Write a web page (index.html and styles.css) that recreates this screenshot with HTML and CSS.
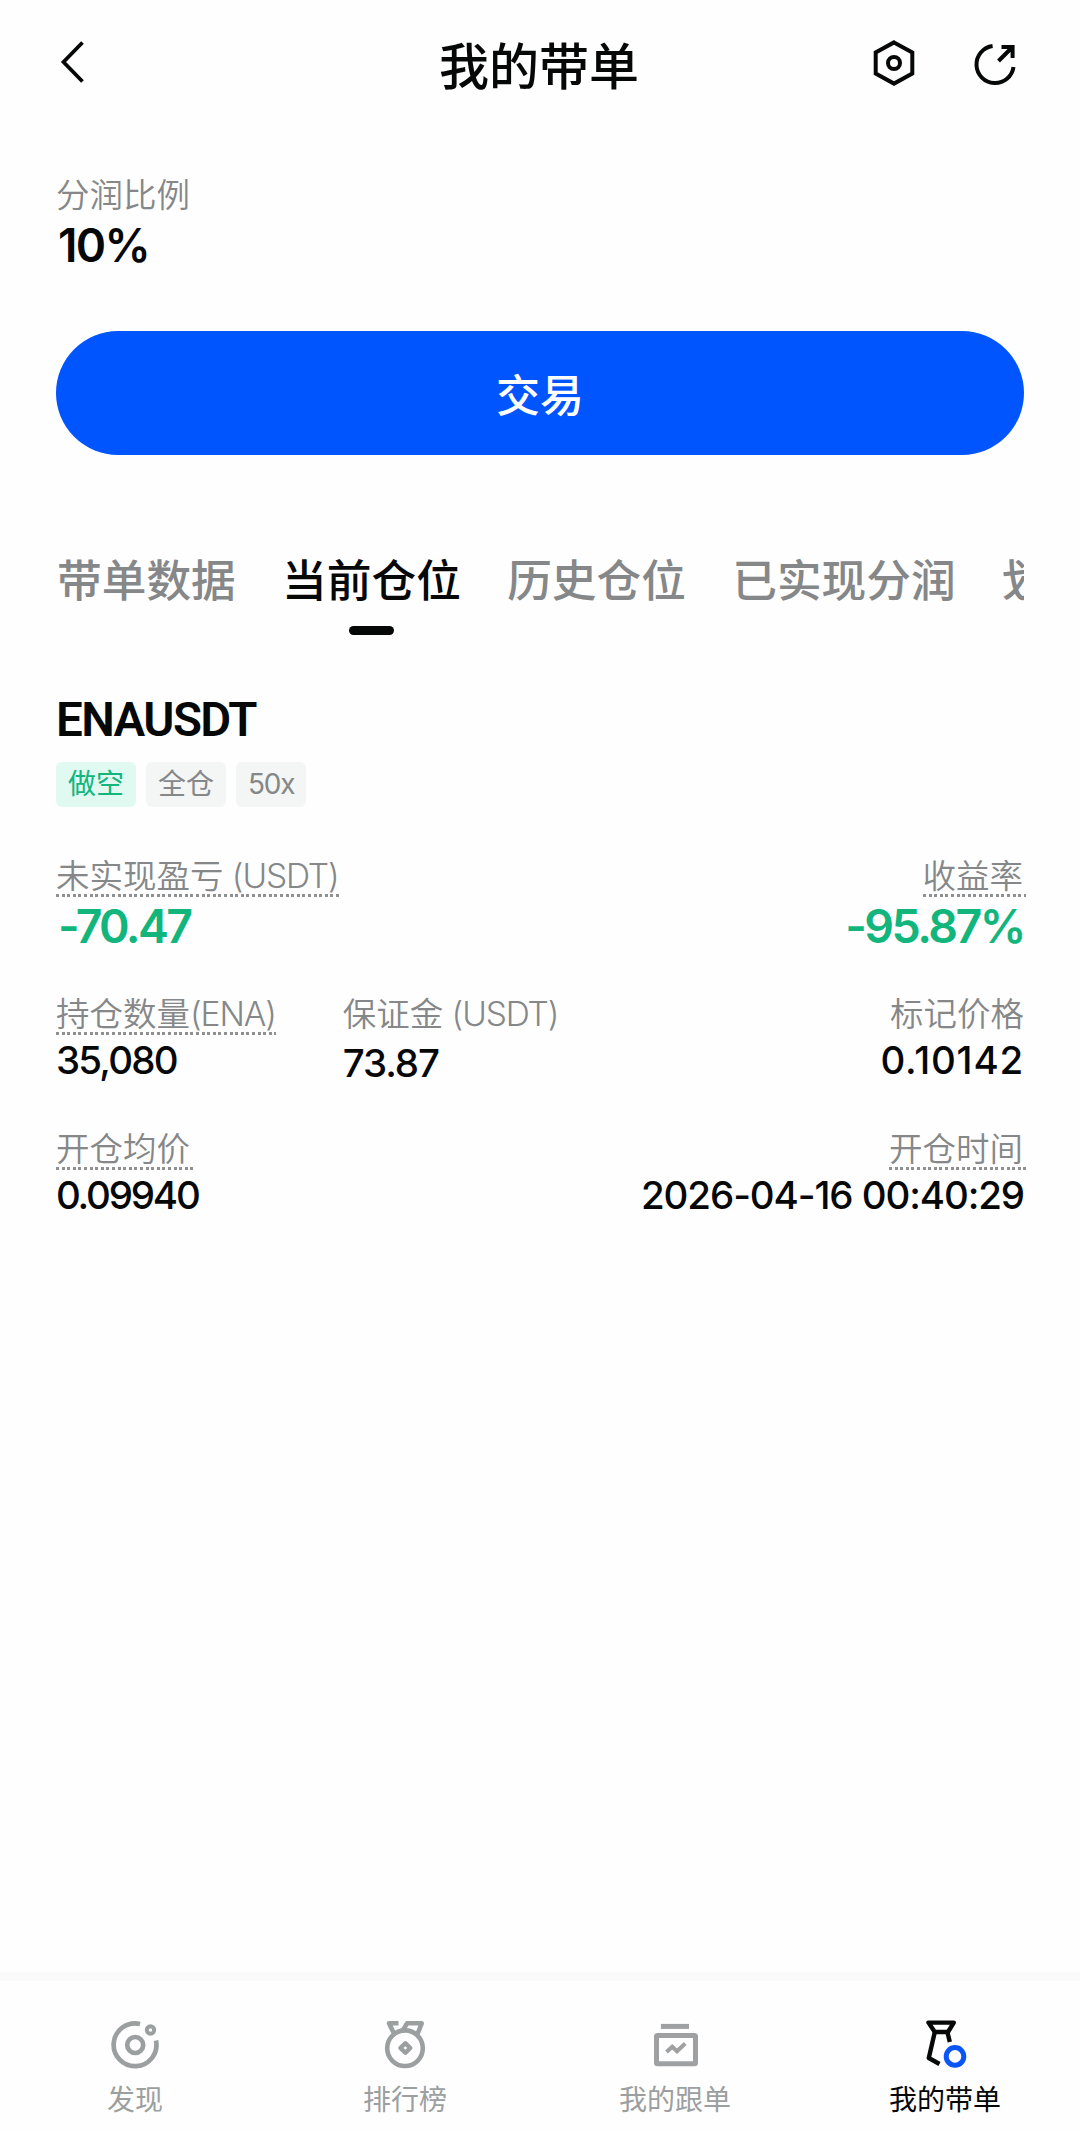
FILE: index.html
```html
<!DOCTYPE html>
<html lang="zh-CN">
<head>
  <meta charset="UTF-8" />
  <title>我的带单</title>
  <link rel="stylesheet" href="styles.css">
</head>
<body>
<header class="topbar">
  <a class="back" href="#">
    <svg width="28" height="46" viewBox="0 0 28 46" fill="none" stroke="#060707" stroke-width="3.8"><path d="M24.5 2.5 L5.5 22 L24.5 41.5"/></svg>
  </a>
  <h1>我的带单</h1>
  <div class="actions">
    <svg width="48" height="48" viewBox="0 0 48 48" fill="none" stroke="#060707" stroke-width="4">
      <path d="M24 3.4 L42.3 13.5 V34.5 L24 44.6 L5.7 34.5 V13.5 Z"/>
      <circle cx="24" cy="24" r="6"/>
    </svg>
    <svg width="48" height="48" viewBox="0 0 48 48" fill="none" stroke="#060707" stroke-width="4">
      <path d="M21.6 7 A18.6 18.6 0 1 0 42.5 28"/>
      <path d="M27.5 22 L41.5 8 M30.5 8 H41.6 V19"/>
    </svg>
  </div>
</header>

<section class="share">
  <p class="label">分润比例</p>
  <p class="rate">10%</p>
  <button class="trade-btn">交易</button>
</section>

<nav class="tabs">
  <a href="#">带单数据</a>
  <a href="#" class="active">当前仓位</a>
  <a href="#">历史仓位</a>
  <a href="#">已实现分润</a>
  <a href="#">划</a>
</nav>

<main class="position">
  <h2>ENAUSDT</h2>
  <div class="tags">
    <span class="tag short">做空</span>
    <span class="tag">全仓</span>
    <span class="tag leverage">50x</span>
  </div>

  <div class="row pnl">
    <div class="cell">
      <span class="label dotted">未实现盈亏<span class="unit"> (USDT)</span></span>
      <span class="value loss">-70.47</span>
    </div>
    <div class="cell right">
      <span class="label dotted">收益率</span>
      <span class="value percent">-95.87%</span>
    </div>
  </div>

  <div class="row">
    <div class="cell">
      <span class="label dotted qty">持仓数量<span class="unit">(ENA)</span></span>
      <span class="value">35,080</span>
    </div>
    <div class="cell margin">
      <span class="label">保证金<span class="unit"> (USDT)</span></span>
      <span class="value">73.87</span>
    </div>
    <div class="cell right">
      <span class="label">标记价格</span>
      <span class="value mark">0.10142</span>
    </div>
  </div>

  <div class="row">
    <div class="cell">
      <span class="label dotted">开仓均价</span>
      <span class="value entry">0.09940</span>
    </div>
    <div class="cell right">
      <span class="label dotted">开仓时间</span>
      <span class="value time">2026-04-16 00:40:29</span>
    </div>
  </div>
</main>

<footer class="bottom-nav">
  <a href="#">
    <svg width="54" height="54" viewBox="0 0 54 54" fill="none" stroke="#9c9fa0" stroke-width="4.7">
      <path d="M32 6 A21.4 21.4 0 1 0 48 22.5"/>
      <circle cx="27.2" cy="27" r="8"/>
      <circle cx="42.5" cy="12" r="3.7" stroke-width="4"/>
    </svg>
    <span>发现</span>
  </a>
  <a href="#">
    <svg width="54" height="54" viewBox="0 0 54 54" fill="none" stroke="#9c9fa0" stroke-width="4.6" stroke-linejoin="round">
      <circle cx="27" cy="30.2" r="17.8"/>
      <path d="M27.3 25.2 L32.3 30 L27.3 34.8 L22.4 30 Z" stroke-width="4.4"/>
      <path d="M20.5 5.3 H11 L15.5 14.5 M24 14 L29 5.3 H43.7 L39.5 16"/>
    </svg>
    <span>排行榜</span>
  </a>
  <a href="#">
    <svg width="54" height="54" viewBox="0 0 54 54" fill="none" stroke="#9fa0a1" stroke-width="5">
      <path d="M12.9 8.4 H41"/>
      <rect x="8.5" y="17.5" width="39" height="28.2" rx="1"/>
      <path d="M18.5 34 L24.2 28.8 L29 33.3 L37.2 25.5" stroke-width="4"/>
    </svg>
    <span>我的跟单</span>
  </a>
  <a href="#" class="active">
    <svg width="54" height="54" viewBox="0 0 54 54" fill="none" stroke="#060707" stroke-width="4.4" stroke-linejoin="round">
      <path d="M10.5 4.6 H35.8 L30 14 H16.8 Z"/>
      <path d="M16.8 14 L10.8 40 L21.5 46 M29.4 14 L31.8 24"/>
      <circle cx="37" cy="38.4" r="8.8" stroke="#0a55f5" stroke-width="5"/>
    </svg>
    <span>我的带单</span>
  </a>
</footer>
</body>
</html>
```
FILE: styles.css
```css
* {
  box-sizing: border-box;
}
body {
  margin: 0;
  height: 2131px;
  display: flex;
  flex-direction: column;
  background: #fefefe;
  color: #060707;
  font-family: Inter, "Noto Sans CJK SC", sans-serif;
  overflow: hidden;
}
h1, h2, p {
  margin: 0;
}
a {
  color: inherit;
  text-decoration: none;
}
svg {
  display: block;
}

.topbar {
  height: 126px;
  padding: 0 61px 0 58px;
  display: grid;
  grid-template-columns: 1fr auto 1fr;
  align-items: center;
}
.topbar h1 {
  padding: 7px 0 0 1px;
  font-size: 50px;
  font-weight: 500;
  line-height: 60px;
}
.actions {
  display: flex;
  justify-content: flex-end;
  gap: 53px;
}

.label {
  color: #858788;
  font-size: 33.5px;
  font-weight: 350;
  line-height: 40px;
  white-space: nowrap;
}
.unit {
  letter-spacing: -1.1px;
}
.share {
  padding: 49px 56px 0;
}
.rate {
  margin-top: 6px;
  padding-left: 2px;
  font-size: 46px;
  font-weight: 600;
  line-height: 48px;
  letter-spacing: -1.6px;
}
.trade-btn {
  display: block;
  width: 100%;
  height: 124px;
  margin-top: 62px;
  border: none;
  border-radius: 62px;
  background: #0055ff;
  color: #fff;
  font-family: inherit;
  font-size: 44px;
  font-weight: 500;
  cursor: pointer;
}

.tabs {
  display: flex;
  gap: 46.3px;
  height: 90px;
  margin: 96px 56px 0;
  padding-left: 1px;
  overflow: hidden;
  color: #858788;
  font-size: 44.7px;
  font-weight: 500;
  line-height: 60px;
  white-space: nowrap;
}
.tabs .active {
  color: #060707;
}
.tabs .active::after {
  content: "";
  display: block;
  width: 45px;
  height: 9px;
  margin: 15px auto 0;
  border-radius: 5px;
  background: #060707;
}

.position {
  flex: 1;
  padding: 51px 56px 0;
}
.position h2 {
  font-family: Roboto, Inter, sans-serif;
  font-size: 47.5px;
  font-weight: 600;
  line-height: 56px;
  letter-spacing: -1.6px;
}
.tags {
  display: flex;
  gap: 10px;
  margin-top: 14px;
}
.tag {
  height: 45px;
  padding: 0 12px;
  border-radius: 6px;
  background: #f4f5f5;
  color: #858788;
  font-size: 28px;
  line-height: 44px;
}
.tag.short {
  background: #e0faf1;
  color: #12b57b;
}
.tag.leverage {
  letter-spacing: -1.2px;
}

.row {
  display: flex;
  justify-content: space-between;
  height: 135px;
}
.row.pnl {
  height: 138px;
  margin-top: 49px;
}
.cell {
  display: flex;
  flex-direction: column;
  align-items: flex-start;
}
.cell.margin {
  flex: 1;
  margin-left: 67px;
}
.cell.right {
  align-items: flex-end;
}
.dotted {
  height: 41px;
  padding-right: 3px;
  background: repeating-linear-gradient(90deg, #8e9091 0 3px, transparent 3px 5.6px) left bottom / 100% 3px no-repeat;
}
.dotted.qty {
  padding-right: 0;
}
.right .dotted {
  margin-right: -2px;
}
.value {
  margin-top: 1px;
  font-size: 38.5px;
  font-weight: 500;
  line-height: 48px;
  letter-spacing: -1.8px;
}
.margin .value {
  margin-top: 5px;
  letter-spacing: -1.1px;
}
.value.mark {
  margin-top: 2px;
  letter-spacing: 0.8px;
}
.value.entry {
  letter-spacing: -2.2px;
}
.value.time {
  letter-spacing: -1.1px;
}
.pnl .value {
  margin-top: 5px;
  font-size: 46.5px;
  font-weight: 600;
  color: #12b57b;
}
.pnl .loss {
  padding-left: 2px;
  letter-spacing: -2.7px;
}
.pnl .percent {
  letter-spacing: -2.5px;
}

.bottom-nav {
  display: grid;
  grid-template-columns: repeat(4, 1fr);
  height: 159px;
  padding-top: 37px;
  border-top: 9px solid #fafafa;
  color: #9c9fa0;
  font-size: 28px;
  line-height: 40px;
}
.bottom-nav a {
  display: flex;
  flex-direction: column;
  align-items: center;
  gap: 8px;
}
.bottom-nav .active {
  color: #060707;
}
```
